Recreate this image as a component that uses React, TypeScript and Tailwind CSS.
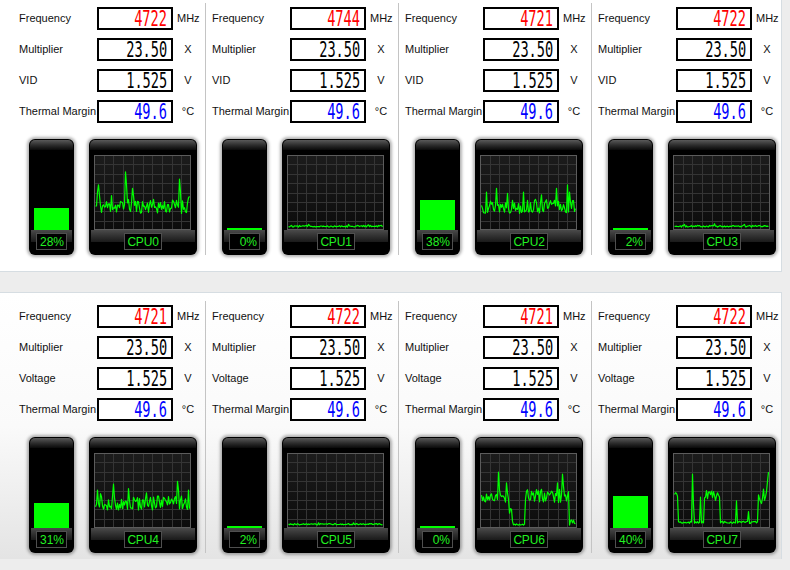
import React from "react";

function mulberry32(a: number) {
  return function () {
    a |= 0;
    a = (a + 0x6d2b79f5) | 0;
    let t = Math.imul(a ^ (a >>> 15), 1 | a);
    t = (t + Math.imul(t ^ (t >>> 7), 61 | t)) ^ t;
    return ((t ^ (t >>> 14)) >>> 0) / 4294967296;
  };
}

const N = 95;

type Seg = { from: number; to: number; base: number; amp: number };

function gen(seed: number, segs: Seg[], spikes: [number, number][]) {
  const r = mulberry32(seed);
  const out: number[] = [];
  for (let i = 0; i < N; i++) {
    const s = segs.find((x) => i >= x.from && i < x.to) || segs[segs.length - 1];
    let v = s.base + (r() - 0.5) * 2 * s.amp;
    out.push(Math.max(0.01, Math.min(0.98, v)));
  }
  spikes.forEach(([i, v]) => {
    if (i < N) out[i] = v;
  });
  return out;
}

const charts: number[][] = [
  gen(11, [{ from: 0, to: N, base: 0.3, amp: 0.1 }], [
    [2, 0.5], [3, 0.6], [4, 0.45], [16, 0.45], [30, 0.78], [31, 0.6], [37, 0.55], [38, 0.45], [55, 0.38], [84, 0.68], [85, 0.5], [93, 0.42], [94, 0.44],
  ]),
  gen(12, [{ from: 0, to: N, base: 0.025, amp: 0.012 }], [[20, 0.05], [60, 0.05], [80, 0.045]]),
  gen(13, [{ from: 0, to: N, base: 0.3, amp: 0.1 }], [
    [5, 0.5], [15, 0.55], [26, 0.48], [42, 0.5], [60, 0.46], [75, 0.55], [86, 0.6], [88, 0.5],
  ]),
  gen(14, [{ from: 0, to: N, base: 0.025, amp: 0.012 }], [[10, 0.05], [40, 0.06], [70, 0.05]]),
  gen(15, [{ from: 0, to: N, base: 0.32, amp: 0.1 }], [
    [2, 0.5], [5, 0.45], [18, 0.58], [33, 0.52], [51, 0.46], [82, 0.62], [83, 0.5], [93, 0.5],
  ]),
  gen(16, [{ from: 0, to: N, base: 0.025, amp: 0.01 }], [[30, 0.045], [65, 0.045]]),
  gen(
    17,
    [
      { from: 0, to: 28, base: 0.4, amp: 0.08 },
      { from: 28, to: 32, base: 0.2, amp: 0.15 },
      { from: 32, to: 44, base: 0.02, amp: 0.01 },
      { from: 44, to: 88, base: 0.42, amp: 0.1 },
      { from: 88, to: N, base: 0.05, amp: 0.04 },
    ],
    [[17, 0.75], [18, 0.5], [25, 0.6], [81, 0.72], [82, 0.55], [76, 0.6]]
  ),
  gen(
    18,
    [
      { from: 0, to: 4, base: 0.45, amp: 0.06 },
      { from: 4, to: 30, base: 0.05, amp: 0.015 },
      { from: 30, to: 46, base: 0.42, amp: 0.08 },
      { from: 46, to: 84, base: 0.05, amp: 0.015 },
      { from: 84, to: N, base: 0.42, amp: 0.12 },
    ],
    [[18, 0.72], [19, 0.3], [26, 0.4], [62, 0.35], [74, 0.2], [93, 0.62], [94, 0.75]]
  ),
];

const CW = 97;
const CH = 75;

function Chart({ data }: { data: number[] }) {
  const pts = data
    .map((v, i) => `${(1.5 + i).toFixed(1)},${(CH - 2 - v * (CH - 3)).toFixed(1)}`)
    .join(" ");
  const vlines = Array.from({ length: 9 }, (_, k) => Math.round((k + 1) * (CW / 10)) + 0.5);
  const hlines = Array.from({ length: 7 }, (_, k) => Math.round((k + 1) * (CH / 8)) + 0.5);
  return (
    <svg width={CW} height={CH} className="block">
      <defs>
        <linearGradient id="cbg" x1="0" y1="0" x2="0" y2="1">
          <stop offset="0" stopColor="#1c1c1c" />
          <stop offset="1" stopColor="#0c0c0c" />
        </linearGradient>
      </defs>
      <rect x="0" y="0" width={CW} height={CH} fill="url(#cbg)" />
      {vlines.map((x) => (
        <line key={"v" + x} x1={x} y1={0} x2={x} y2={CH} stroke="#353535" strokeWidth="1" />
      ))}
      {hlines.map((y) => (
        <line key={"h" + y} x1={0} y1={y} x2={CW} y2={y} stroke="#353535" strokeWidth="1" />
      ))}
      <rect x="0.5" y="0.5" width={CW - 1} height={CH - 1} fill="none" stroke="#5c5c5c" strokeWidth="1" />
      <polyline points={pts} fill="none" stroke="#00ff00" strokeWidth="1.2" strokeLinejoin="round" />
    </svg>
  );
}

function SmallGauge({ pct }: { pct: number }) {
  const h = Math.max(2, Math.round((pct / 100) * 80));
  return (
    <div className="w-[45px] h-[116px] shrink-0 rounded-[6px] bg-black shadow-[0_0_3px_2px_rgba(0,0,0,0.3)] flex flex-col">
      <div className="h-[10px] mx-[1px] mt-[1px] rounded-t-[5px] bg-gradient-to-b from-[#5a5a5a] via-[#2e2e2e] to-[#0a0a0a]" />
      <div className="h-[80px] px-[5px] flex flex-col justify-end">
        <div className="bg-[#00ff00] w-full" style={{ height: h }} />
      </div>
      <div className="relative flex-1">
        <div className="absolute left-[2px] right-[2px] top-0 h-[12px] bg-gradient-to-b from-[#4a4a4a] to-[#1a1a1a]" />
        <div className="absolute left-[7px] top-[3px] w-[31px] h-[17px] bg-black border border-[#4f4f4f] flex items-center justify-end pr-[2px]">
          <span className="text-[12px] leading-none text-[#22f022] font-['Liberation_Sans',Arial,sans-serif]">{pct}%</span>
        </div>
      </div>
    </div>
  );
}

function BigGauge({ name, data }: { name: string; data: number[] }) {
  return (
    <div className="w-[108px] h-[116px] shrink-0 rounded-[6px] bg-black shadow-[0_0_3px_2px_rgba(0,0,0,0.3)] flex flex-col">
      <div className="h-[10px] mx-[1px] mt-[1px] rounded-t-[5px] bg-gradient-to-b from-[#5a5a5a] via-[#2e2e2e] to-[#0a0a0a]" />
      <div className="h-[5px]" />
      <div className="px-[5px] h-[75px]">
        <Chart data={data} />
      </div>
      <div className="relative flex-1">
        <div className="absolute left-[2px] right-[2px] top-0 h-[12px] bg-gradient-to-b from-[#4a4a4a] to-[#1a1a1a]" />
        <div className="absolute left-0 right-0 top-[3px] flex justify-center">
          <div className="h-[17px] bg-black border border-[#4f4f4f] flex items-center px-[2px]">
            <span className="text-[12px] leading-none text-[#22f022] tracking-[-0.2px] font-['Liberation_Sans',Arial,sans-serif]">{name}</span>
          </div>
        </div>
      </div>
    </div>
  );
}

function Row({ label, value, color, unit, last }: { label: string; value: string; color: string; unit: string; last?: boolean }) {
  return (
    <div className={"flex items-center h-[23px] " + (last ? "" : "mb-[8px]")}>
      <div className="w-[78px] shrink-0 text-[11px] text-[#111] whitespace-nowrap">{label}</div>
      <div className="w-[76px] h-[23px] shrink-0 border-2 border-black bg-white flex items-center justify-end pr-[4px] overflow-hidden">
        <span
          className={"inline-block origin-right scale-x-[0.62] text-[22px] leading-none font-['DejaVu_Sans_Mono',monospace] " + color}
        >
          {value}
        </span>
      </div>
      <div className="w-[22px] ml-[4px] text-center text-[11px] text-[#111] whitespace-nowrap">{unit}</div>
    </div>
  );
}

function Column({ idx, freq, pct, voltLabel, last }: { idx: number; freq: string; pct: number; voltLabel: string; last?: boolean }) {
  return (
    <div
      className={
        "shrink-0 pl-[6px] pt-[4px] " +
        (last ? "w-[189px]" : "w-[193px] border-r border-[#c4c4c4]")
      }
    >
      <Row label="Frequency" value={freq} color="text-[#ff0000]" unit="MHz" />
      <Row label="Multiplier" value="23.50" color="text-black" unit="X" />
      <Row label={voltLabel} value="1.525" color="text-black" unit="V" />
      <Row label="Thermal Margin" value="49.6" color="text-[#0000ff]" unit="°C" last />
      <div className="flex gap-[15px] ml-[10px] mt-[16px]">
        <SmallGauge pct={pct} />
        <BigGauge name={`CPU${idx}`} data={charts[idx]} />
      </div>
    </div>
  );
}

const top = [
  { f: "4722", p: 28 },
  { f: "4744", p: 0 },
  { f: "4721", p: 38 },
  { f: "4722", p: 2 },
];
const bottom = [
  { f: "4721", p: 31 },
  { f: "4722", p: 2 },
  { f: "4721", p: 0 },
  { f: "4722", p: 40 },
];

export default function App() {
  return (
    <div className="w-[790px] h-[570px] overflow-hidden bg-[#ededed] font-['Liberation_Sans',Arial,sans-serif]">
      <div className="w-[782px] bg-white border-r border-b border-[#d6dde2] pt-[3px] pb-[9px] pl-[13px] flex">
        {top.map((c, i) => (
          <div key={i} className="flex pb-[7px]">
            <Column idx={i} freq={c.f} pct={c.p} voltLabel="VID" last={i === 3} />
          </div>
        ))}
      </div>
      <div className="h-[20px]" />
      <div className="w-[782px] h-[267px] bg-gradient-to-b from-white via-[#fafafa] to-[#e4e4e4] border-t border-r border-[#d6dde2] pt-[8px] pl-[13px] flex">
        {bottom.map((c, i) => (
          <div key={i} className="flex pb-[6px]">
            <Column idx={i + 4} freq={c.f} pct={c.p} voltLabel="Voltage" last={i === 3} />
          </div>
        ))}
      </div>
    </div>
  );
}
